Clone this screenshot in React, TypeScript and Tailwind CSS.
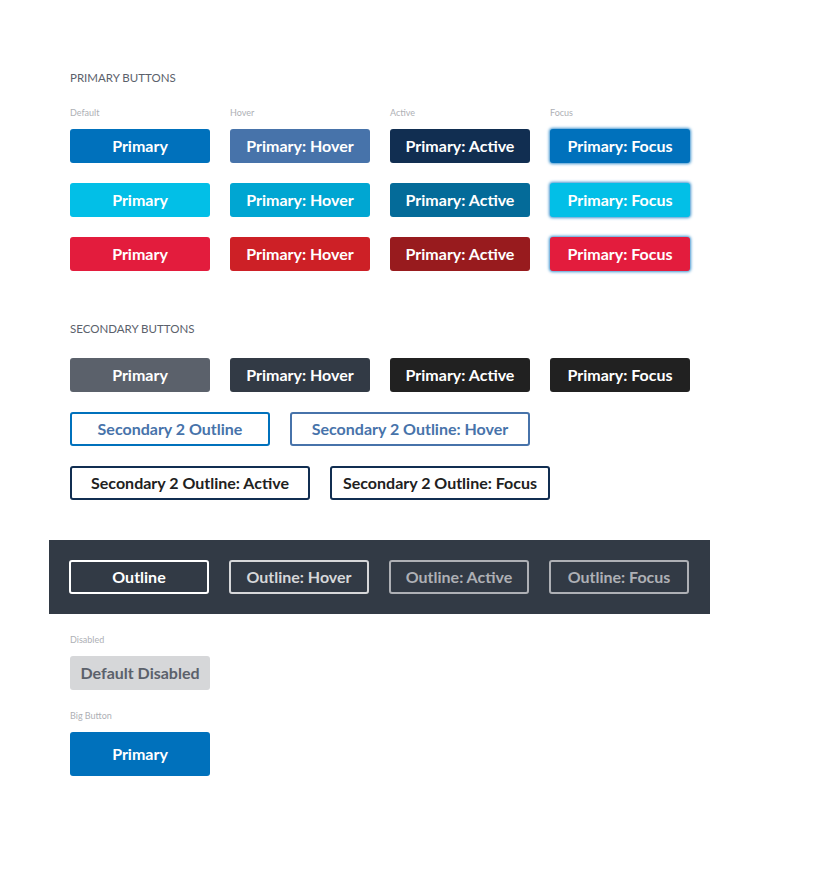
const font = { fontFamily: "Lato, 'Noto Sans', sans-serif" };

type Btn = { label: string; cls: string };

const primaryRows: Btn[][] = [
  [
    { label: "Primary", cls: "bg-[#0071bc]" },
    { label: "Primary: Hover", cls: "bg-[#4773aa]" },
    { label: "Primary: Active", cls: "bg-[#112e51]" },
    { label: "Primary: Focus", cls: "bg-[#0071bc] shadow-[0_0_3px_1px_#3e94cf]" },
  ],
  [
    { label: "Primary", cls: "bg-[#02bfe7]" },
    { label: "Primary: Hover", cls: "bg-[#00a6d2]" },
    { label: "Primary: Active", cls: "bg-[#046b99]" },
    { label: "Primary: Focus", cls: "bg-[#02bfe7] shadow-[0_0_3px_1px_#3e94cf]" },
  ],
  [
    { label: "Primary", cls: "bg-[#e31c3d]" },
    { label: "Primary: Hover", cls: "bg-[#cd2026]" },
    { label: "Primary: Active", cls: "bg-[#981b1e]" },
    { label: "Primary: Focus", cls: "bg-[#e31c3d] shadow-[0_0_3px_1px_#3e94cf]" },
  ],
];

const secondary: Btn[] = [
  { label: "Primary", cls: "bg-[#5b616b]" },
  { label: "Primary: Hover", cls: "bg-[#323a45]" },
  { label: "Primary: Active", cls: "bg-[#212121]" },
  { label: "Primary: Focus", cls: "bg-[#212121]" },
];

const darkOutline: Btn[] = [
  { label: "Outline", cls: "border-white text-white" },
  { label: "Outline: Hover", cls: "border-[#d6d7d9] text-[#d6d7d9]" },
  { label: "Outline: Active", cls: "border-[#aeb0b5] text-[#aeb0b5]" },
  { label: "Outline: Focus", cls: "border-[#aeb0b5] text-[#aeb0b5]" },
];

function Button({ label, cls }: Btn) {
  return (
    <button
      className={
        "h-[34px] w-[140px] rounded-[3px] text-[16px] font-bold text-white flex items-center justify-center " +
        cls
      }
    >
      {label}
    </button>
  );
}

function Outline({ label, cls }: Btn) {
  return (
    <button
      className={
        "h-[34px] rounded-[3px] border-2 bg-transparent text-[16px] font-bold flex items-center justify-center " +
        cls
      }
    >
      {label}
    </button>
  );
}

function Heading({ children }: { children: string }) {
  return (
    <h2 className="text-[11.5px] leading-[14px] text-[#5b616b] uppercase mb-[22px]">
      {children}
    </h2>
  );
}

function Caption({ children }: { children: string }) {
  return (
    <div className="text-[9px] leading-[12px] text-[#aeb0b5] mb-[10px]">
      {children}
    </div>
  );
}

export default function App() {
  return (
    <div className="min-h-screen bg-white pl-[70px] pt-[71px] pb-10" style={font}>
      <Heading>Primary Buttons</Heading>
      <div className="flex gap-5">
        {["Default", "Hover", "Active", "Focus"].map((c) => (
          <div key={c} className="w-[140px]">
            <Caption>{c}</Caption>
          </div>
        ))}
      </div>
      <div className="flex flex-col gap-5">
        {primaryRows.map((row, i) => (
          <div key={i} className="flex gap-5">
            {row.map((b) => (
              <Button key={b.label} {...b} />
            ))}
          </div>
        ))}
      </div>

      <div className="mt-[51px]">
        <Heading>Secondary Buttons</Heading>
      </div>
      <div className="flex flex-col gap-5">
        <div className="flex gap-5">
          {secondary.map((b) => (
            <Button key={b.label} {...b} />
          ))}
        </div>
        <div className="flex gap-5">
          <Outline label="Secondary 2 Outline" cls="w-[200px] border-[#0071bc] text-[#4773aa]" />
          <Outline label="Secondary 2 Outline: Hover" cls="w-[240px] border-[#4773aa] text-[#4773aa]" />
        </div>
        <div className="flex gap-5">
          <Outline label="Secondary 2 Outline: Active" cls="w-[240px] border-[#112e51] text-[#212121]" />
          <Outline label="Secondary 2 Outline: Focus" cls="w-[220px] border-[#112e51] text-[#212121]" />
        </div>
      </div>

      <div className="mt-10 -ml-[21px] w-[661px] bg-[#323a45] py-5 pl-[20px] flex gap-5">
        {darkOutline.map((b) => (
          <Outline key={b.label} label={b.label} cls={"w-[140px] " + b.cls} />
        ))}
      </div>

      <div className="mt-[20px]">
        <Caption>Disabled</Caption>
      </div>
      <button className="h-[34px] w-[140px] rounded-[3px] bg-[#d6d7d9] text-[16px] font-bold text-[#5b616b] mt-px flex items-center justify-center">
        Default Disabled
      </button>

      <div className="mt-[20px]">
        <Caption>Big Button</Caption>
      </div>
      <button className="h-[44px] w-[140px] rounded-[3px] bg-[#0071bc] text-[16px] font-bold text-white flex items-center justify-center">
        Primary
      </button>
    </div>
  );
}
